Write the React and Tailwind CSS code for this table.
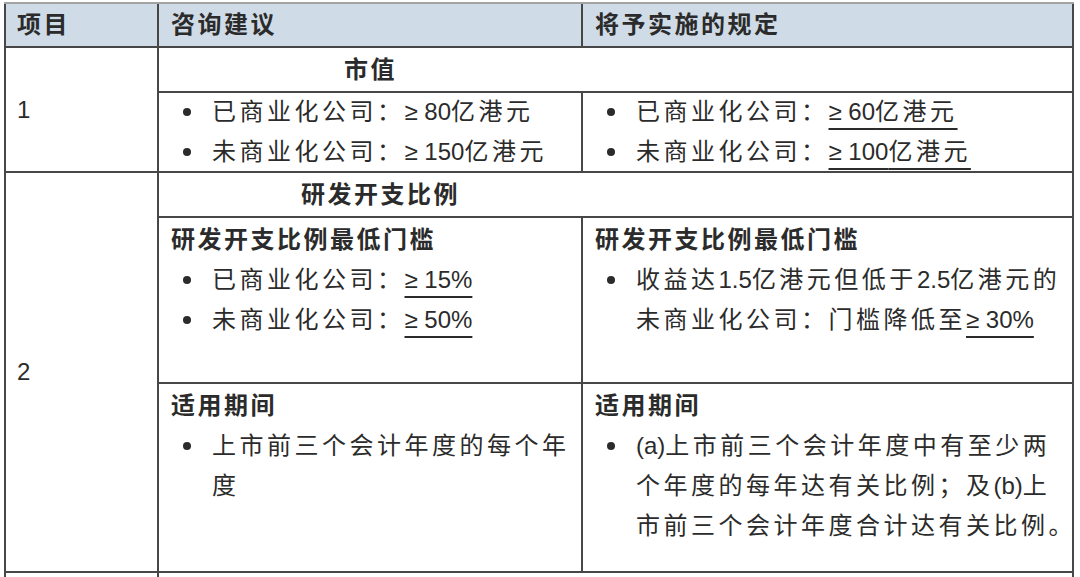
const font = "font-['Liberation_Sans','Noto_Sans_CJK_SC',sans-serif]";

function Dot({ children }) {
  return (
    <div className="flex">
      <div className="w-[53px] h-[40px] shrink-0 flex items-center pl-[24px]">
        <span className="w-[8px] h-[8px] rounded-full bg-[#2b2b2b]" />
      </div>
      <div className="whitespace-nowrap">{children}</div>
    </div>
  );
}

// latin runs keep normal spacing
function L({ children, u }) {
  return (
    <span className={u ? 'tracking-normal underline decoration-[1.5px] underline-offset-[8px]' : 'tracking-normal'}>
      {children}
    </span>
  );
}

function U({ children }) {
  return <span className="underline decoration-[1.5px] underline-offset-[8px]">{children}</span>;
}

function Heading({ children }) {
  return <div className="pl-[12px] font-semibold tracking-[2.5px] whitespace-nowrap">{children}</div>;
}

export default function App() {
  return (
    <div className={`h-[577px] overflow-hidden bg-white pt-[2px] pl-[4px] text-[24px] leading-[40px] text-[#2b2b2b] ${font}`}>
      <div className="grid w-max grid-cols-[151px_422px_489px] grid-rows-[42px_43px_78px_43px_164px_187px_20px] gap-[2px] px-[2px] pb-[2px] border-t-[2px] border-t-[#a3a3a3] bg-[#474747] tracking-[3.5px]">
        {/* header */}
        <div className="bg-[#cfdbe6] flex items-center pl-[11px] font-semibold tracking-[2.5px]">项目</div>
        <div className="bg-[#cfdbe6] flex items-center pl-[12px] font-semibold tracking-[2.5px]">咨询建议</div>
        <div className="bg-[#cfdbe6] flex items-center pl-[12px] font-semibold tracking-[2.5px]">将予实施的规定</div>

        {/* row 1 */}
        <div className="row-span-2 bg-white flex items-center pl-[11px]">1</div>
        <div className="col-span-2 bg-white flex items-center pl-[185px] font-semibold tracking-[2.5px]">市值</div>
        <div className="bg-white flex flex-col justify-center">
          <Dot>已商业化公司：<L>≥&nbsp;80</L>亿港元</Dot>
          <Dot>未商业化公司：<L>≥&nbsp;150</L>亿港元</Dot>
        </div>
        <div className="bg-white flex flex-col justify-center">
          <Dot>已商业化公司：<U><L>≥&nbsp;60</L>亿港元</U></Dot>
          <Dot>未商业化公司：<U><L>≥&nbsp;100</L>亿港元</U></Dot>
        </div>

        {/* row 2 */}
        <div className="row-span-3 bg-white flex items-center pl-[11px]">2</div>
        <div className="col-span-2 bg-white flex items-center pl-[142px] font-semibold tracking-[2.5px]">研发开支比例</div>
        <div className="bg-white pt-[2px]">
          <Heading>研发开支比例最低门槛</Heading>
          <Dot>已商业化公司：<L u>≥&nbsp;15%</L></Dot>
          <Dot>未商业化公司：<L u>≥&nbsp;50%</L></Dot>
        </div>
        <div className="bg-white pt-[2px]">
          <Heading>研发开支比例最低门槛</Heading>
          <Dot>
            <div>收益达<L>1.5</L>亿港元但低于<L>2.5</L>亿港元的</div>
            <div>未商业化公司：门槛降低至<L u>≥&nbsp;30%</L></div>
          </Dot>
        </div>
        <div className="bg-white pt-[2px]">
          <Heading>适用期间</Heading>
          <Dot>
            <div>上市前三个会计年度的每个年</div>
            <div>度</div>
          </Dot>
        </div>
        <div className="bg-white pt-[2px]">
          <Heading>适用期间</Heading>
          <Dot>
            <div><L>(a)</L>上市前三个会计年度中有至少两</div>
            <div>个年度的每年达有关比例；及<L>(b)</L>上</div>
            <div>市前三个会计年度合计达有关比例。</div>
          </Dot>
        </div>

        {/* next row, cut off */}
        <div className="bg-white" />
        <div className="col-span-2 bg-white" />
      </div>
    </div>
  );
}
